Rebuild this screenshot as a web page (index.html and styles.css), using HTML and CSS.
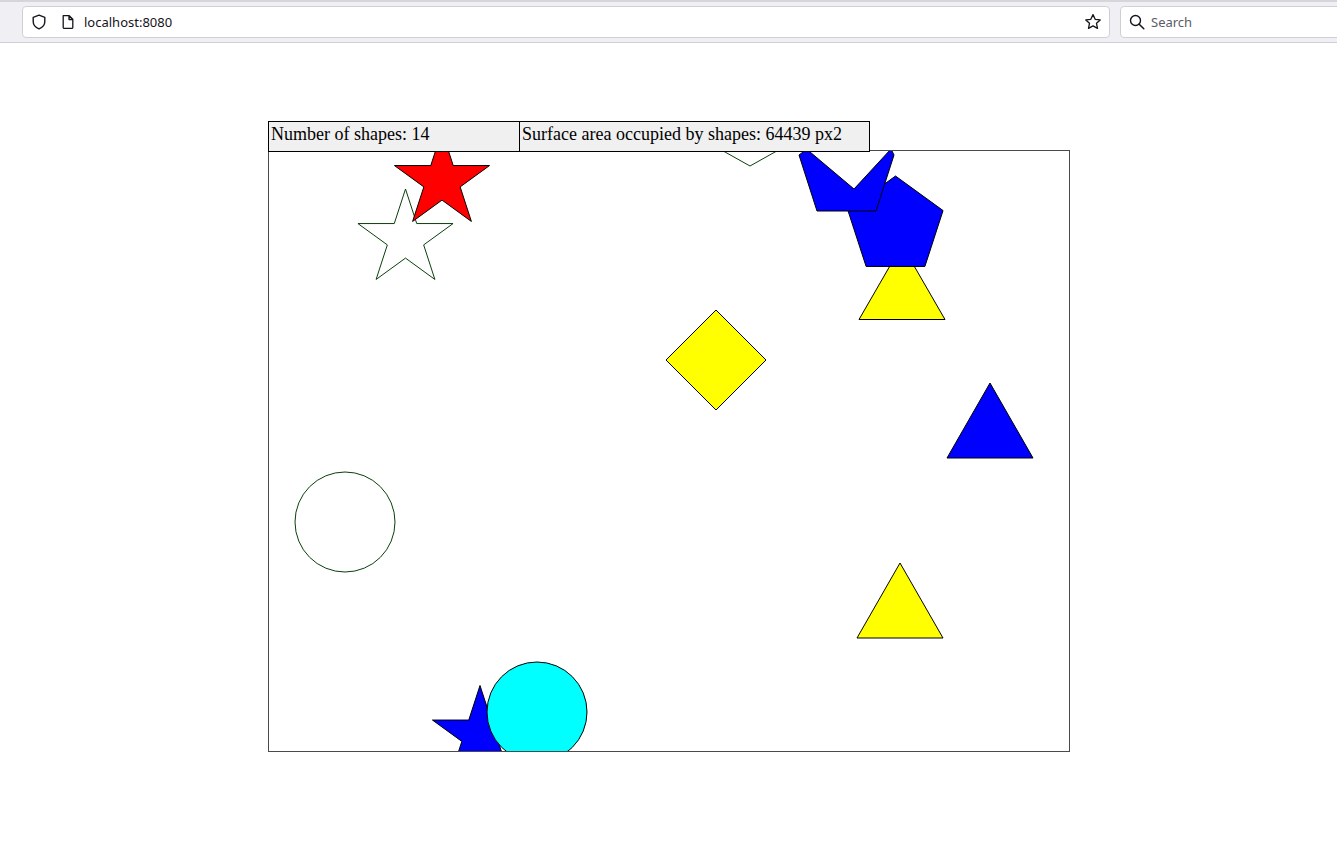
FILE: index.html
```html
<!DOCTYPE html>
<html>
<head>
<meta charset="utf-8">
<title>Shapes</title>
<link rel="stylesheet" href="styles.css">
</head>
<body>
<div class="toolbar">
  <div class="urlbar">
    <svg class="ico shield" width="16" height="16" viewBox="0 0 16 16"><path d="M8 1.2 L2.2 3.3 V7.4 C2.2 11 4.6 13.4 8 14.8 C11.4 13.4 13.8 11 13.8 7.4 V3.3 Z" fill="none" stroke="#15141a" stroke-width="1.4" stroke-linejoin="round"/></svg>
    <svg class="ico page" width="16" height="16" viewBox="0 0 16 16"><path d="M3.2 1.7 H9.2 L12.8 5.3 V13.6 A0.7 0.7 0 0 1 12.1 14.3 H3.9 A0.7 0.7 0 0 1 3.2 13.6 Z M9 1.9 V5.5 H12.6" fill="none" stroke="#15141a" stroke-width="1.3" stroke-linejoin="round"/></svg>
    <span class="url">localhost:8080</span>
    <svg class="ico bookmark" width="18" height="18" viewBox="0 0 18 18"><path d="M9 1.6 L11.2 6.3 L16.2 6.9 L12.5 10.3 L13.5 15.4 L9 12.9 L4.5 15.4 L5.5 10.3 L1.8 6.9 L6.8 6.3 Z" fill="none" stroke="#15141a" stroke-width="1.3" stroke-linejoin="round"/></svg>
  </div>
  <div class="searchbar">
    <svg class="ico mag" width="16" height="16" viewBox="0 0 16 16"><circle cx="6.5" cy="6.5" r="5" fill="none" stroke="#15141a" stroke-width="1.4"/><path d="M10.2 10.2 L14.8 14.8" stroke="#15141a" stroke-width="1.5" stroke-linecap="round"/></svg>
    <span class="search-text">Search</span>
  </div>
</div>

<div class="stage">
  <div class="stats">
    <div class="stat stat-count">Number of shapes: 14</div>
    <div class="stat stat-area">Surface area occupied by shapes: 64439 px2</div>
  </div>
  <div class="board">
    <svg class="shapes" width="800" height="600" viewBox="0 0 800 600">
      <defs>
        <polygon id="star" points="0,-50 11.23,-15.45 47.55,-15.45 18.17,5.9 29.39,40.45 0,19.1 -29.39,40.45 -18.17,5.9 -47.55,-15.45 -11.23,-15.45"/>
        <polygon id="penta" points="0,-50 47.55,-15.45 29.39,40.45 -29.39,40.45 -47.55,-15.45"/>
      </defs>
      <g stroke="#000" stroke-width="1" stroke-linejoin="miter" transform="translate(0,-1)">
        <polygon points="431,-12 481,16 531,-12" fill="#fff" stroke="#0a3f0a"/>
        <polygon points="590,169.5 676,169.5 633,95" fill="#ffff00"/>
        <use href="#penta" x="626.5" y="76" fill="#0000ff"/>
        <polygon points="530,5 536,0.5 537.5,-1 585,39 622,-1 625,5 607,61 548,61" fill="#0000ff"/>
        <use href="#star" x="136.5" y="89" fill="#ffffff" stroke="#0a3f0a"/>
        <use href="#star" x="173" y="31" fill="#ff0000"/>
        <polygon points="447,160 497,210 447,260 397,210" fill="#ffff00"/>
        <polygon points="721,233 678,308 764,308" fill="#0000ff"/>
        <circle cx="76" cy="372" r="50" fill="#fff" stroke="#0a3f0a"/>
        <polygon points="631,413 588,488 674,488" fill="#ffff00"/>
        <use href="#star" x="211" y="585.5" fill="#0000ff"/>
        <circle cx="268" cy="562" r="50" fill="#00ffff"/>
      </g>
    </svg>
  </div>
</div>
</body>
</html>
```
FILE: styles.css
```css
html, body {
  margin: 0;
  padding: 0;
  background: #ffffff;
  overflow: hidden;
}

body {
  width: 1337px;
  height: 867px;
  font-family: "Liberation Serif", "Times New Roman", serif;
}

.toolbar {
  box-sizing: border-box;
  height: 43px;
  background: #f0f0f4;
  border-top: 2px solid #d6d6da;
  border-bottom: 1px solid #cfcfd4;
  display: flex;
  align-items: center;
  padding-left: 22px;
  gap: 10px;
  font-family: "Noto Sans", "Open Sans", sans-serif;
}

.urlbar,
.searchbar {
  box-sizing: border-box;
  height: 32px;
  background: #ffffff;
  border: 1px solid #cfcfd8;
  border-radius: 4px;
  display: flex;
  align-items: center;
  flex-shrink: 0;
}

.urlbar {
  width: 1088px;
  padding-left: 8px;
  padding-right: 7px;
}

.searchbar {
  width: 240px;
  padding-left: 8px;
}

.ico {
  flex-shrink: 0;
  display: block;
}

.page {
  margin-left: 13px;
}

.url {
  margin-left: 8px;
  font-size: 13px;
  color: #15141a;
  flex: 1;
}

.search-text {
  margin-left: 6px;
  font-size: 13px;
  color: #5b5b66;
}

.stage {
  padding-top: 78px;
  padding-left: 268px;
}

.stats {
  display: flex;
  position: relative;
  z-index: 2;
}

.stat {
  box-sizing: border-box;
  height: 31px;
  background: #f0f0f0;
  border: 1px solid #000;
  font-size: 18px;
  line-height: 21px;
  padding-top: 2px;
  color: #000;
  padding-left: 2px;
  white-space: nowrap;
}

.stat-count {
  width: 252px;
}

.stat-area {
  width: 350px;
  border-left: none;
}

.board {
  box-sizing: border-box;
  width: 802px;
  height: 602px;
  margin-top: -2px;
  border: 1px solid #4a4a4a;
  background: #ffffff;
  position: relative;
  z-index: 1;
}

.shapes {
  display: block;
  overflow: hidden;
}
```
